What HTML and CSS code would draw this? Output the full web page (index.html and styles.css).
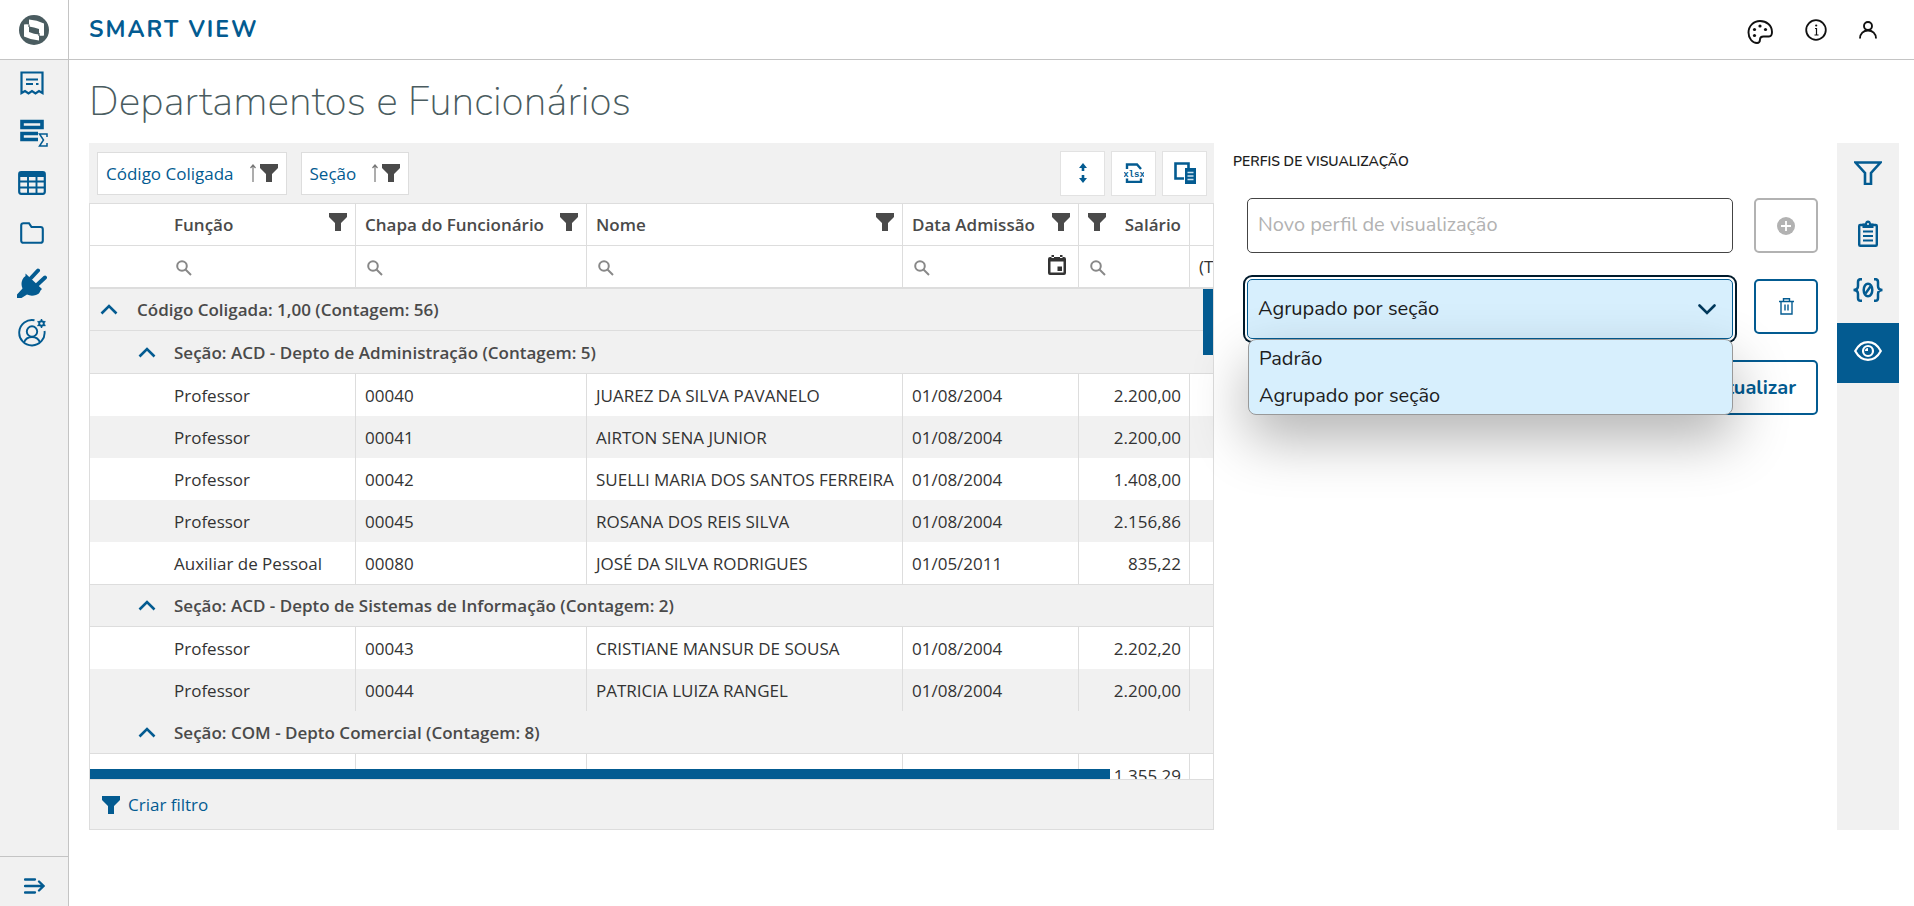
FILE: index.html
```html
<!DOCTYPE html>
<html lang="pt-BR">
<head>
  <meta charset="UTF-8">
  <title>Smart View</title>
  <link rel="stylesheet" href="styles.css">
</head>
<body>
  <svg class="sprite" aria-hidden="true">
    <symbol id="i-funnel" viewBox="0 0 18 18"><path d="M0 0h18v4l-6 6v8H6v-8L0 4z" fill="currentColor"/></symbol>
    <symbol id="i-search" viewBox="0 0 16 16"><g fill="none" stroke="currentColor" stroke-width="2"><circle cx="6" cy="6" r="4.8"/><path d="M9.5 9.5L15 15"/></g></symbol>
    <symbol id="i-up" viewBox="0 0 18 11"><path d="M1.5 9.5L9 2l7.500 7.500" fill="none" stroke="currentColor" stroke-width="2.600"/></symbol>
    <symbol id="i-sort" viewBox="0 0 6 18"><path d="M3 18V1M.5 4L3 1l2.500 3" fill="none" stroke="currentColor" stroke-width="1.200"/></symbol>
  </svg>

  <header class="header">
    <a class="logo" href="#" aria-label="Início">
      <svg width="30" height="30" viewBox="0 0 30 30"><circle cx="15" cy="15" r="15" fill="#4a5c60"/><path d="M10 4.500q8 .5 15 4V20.500q-2 .5-5 0v5q-8-.5-15-4V9.500q2-.5 5 0z" fill="#fff"/><path d="M10 11.500q5 .5 10 2.500v5.500q-5-.5-10-2.500z" fill="#4a5c60"/><path d="M10 9.500v2.500M20 18v3" stroke="#4a5c60" stroke-width="1.200"/></svg>
    </a>
    <span class="brand">SMART VIEW</span>
    <div class="header-actions">
      <button class="plain-btn palette" title="Tema">
        <svg width="26" height="26" viewBox="0 0 26 26"><path d="M13 2C6.500 2 1.500 7 1.500 13.500c0 6 4 10.500 8.500 10.500 3 0 3-2 3-3.500 0-2.500 1.500-3 3.500-3H22c2 0 3-2 3-4.500C25 6.500 19.500 2 13 2z" fill="none" stroke="#111" stroke-width="1.900"/><g fill="#111"><circle cx="7.500" cy="10.500" r="1.600"/><circle cx="13" cy="7" r="1.600"/><circle cx="18.500" cy="10.500" r="1.600"/><circle cx="7.500" cy="16.500" r="1.600"/></g></svg>
      </button>
      <button class="plain-btn" title="Sobre">
        <svg width="22" height="22" viewBox="0 0 22 22"><circle cx="11" cy="11" r="9.800" fill="none" stroke="#111" stroke-width="1.800"/><path d="M10 9.500h1.500V16M9.500 16h4" stroke="#111" stroke-width="1.200" fill="none"/><circle cx="11.200" cy="6.500" r="1.100" fill="#111"/></svg>
      </button>
      <button class="plain-btn" title="Usuário">
        <svg width="18" height="18" viewBox="0 0 18 18"><g fill="none" stroke="#111" stroke-width="1.900"><circle cx="9" cy="5" r="4"/><path d="M1 17.500C1 12.500 4.500 9.500 9 9.500s8 3 8 8"/></g></svg>
      </button>
    </div>
  </header>

  <div class="page">
    <nav class="sidebar">
      <a href="#" title="Relatórios"><svg width="24" height="24" viewBox="0 0 24 24"><path d="M1.500 22V1.500h21V22l-3.500-2-3.500 2.500L12 20l-3.500 2.500L5 20z" fill="none" stroke="currentColor" stroke-width="2.200"/><path d="M6 8.500h12M6 13h7M16 13h2.500" stroke="currentColor" stroke-width="2.200"/></svg></a>
      <a href="#" title="Visão de dados"><svg class="sigma" width="28" height="28" viewBox="0 0 28 28"><path d="M2 2.500h20v6H2zM18 14.500H2v6h16" fill="none" stroke="currentColor" stroke-width="3.600"/><path d="M27 18v-3h-7.500l4 6-4 6H27v-3" fill="none" stroke="currentColor" stroke-width="1.500"/></svg></a>
      <a href="#" title="Tabelas"><svg width="28" height="24" viewBox="0 0 28 24"><rect x="1.200" y="1.200" width="25.600" height="21.600" rx="2" fill="none" stroke="currentColor" stroke-width="2.200"/><path d="M1 1h26v5H1z" fill="currentColor"/><path d="M1 10.500h26M1 16.500h26M10 4v19M18.500 4v19" stroke="currentColor" stroke-width="1.900"/></svg></a>
      <a href="#" title="Pastas"><svg width="24" height="22" viewBox="0 0 24 22"><path d="M1.200 3.500q0-2.300 2.300-2.300h5.500L11.500 5h9q2.300 0 2.300 2.300v11.200q0 2.300-2.300 2.300h-17q-2.300 0-2.300-2.300z" fill="none" stroke="currentColor" stroke-width="2.100"/></svg></a>
      <a href="#" title="Conectores"><svg width="30" height="30" viewBox="0 0 30 30"><path d="M8.500 5.500l16.500 15.500-1.500 1.500q-1 3.500-4.500 4.500-5 1.500-9-.5L4.500 30H0v-3.500l5.500-6q-2-4.500 0-9 1-2.500 3-3.500z" fill="currentColor"/><path d="M14 10l7-7.500M20.500 16.500l7.500-7" stroke="currentColor" stroke-width="4" stroke-linecap="round"/></svg></a>
      <a href="#" title="Administração"><svg width="28" height="28" viewBox="0 0 28 28"><g fill="none" stroke="currentColor" stroke-width="1.900"><path d="M16.500 1.300A12.700 12.700 0 1 0 26.500 12"/><circle cx="14" cy="12.500" r="5.200"/><path d="M6 23.500q2-5.500 8-5.500t8 5.500"/><circle cx="23.500" cy="4.500" r="2.300"/><path d="M23.500 0v9M19.500 2.300l8 4.500M19.500 6.800l8-4.500" stroke-width="1.500" stroke-dasharray="2.300 4.500"/></g></svg></a>
      <button class="plain-btn expand" title="Expandir menu"><svg width="21" height="16" viewBox="0 0 21 16"><path d="M1 1.500h10M1 8h18M1 14.500h10M15 3.500L19.500 8 15 12.500" fill="none" stroke="currentColor" stroke-width="2.300" stroke-linecap="round"/></svg></button>
    </nav>

    <main class="main">
      <h1>Departamentos e Funcionários</h1>

      <div class="workspace">
        <section class="grid">
          <div class="toolbar">
            <button class="chip">Código Coligada <svg class="sort"><use href="#i-sort"/></svg><svg class="funnel"><use href="#i-funnel"/></svg></button>
            <button class="chip">Seção <svg class="sort"><use href="#i-sort"/></svg><svg class="funnel"><use href="#i-funnel"/></svg></button>
            <div class="tools">
              <button class="tool" title="Expandir"><svg width="8" height="20" viewBox="0 0 8 20"><path d="M4 0l4 5H5.300v3H2.700V5H0zM4 20l4-5H5.300v-3H2.700v3H0z" fill="currentColor"/></svg></button>
              <button class="tool" title="Exportar para Excel"><svg width="20" height="20" viewBox="0 0 20 20"><path d="M3 6V1.500h10L17 6M3 15.500V19h14v-3.500" fill="none" stroke="currentColor" stroke-width="2.400"/><text class="xlsx" x="10" y="14" text-anchor="middle">xlsx</text></svg></button>
              <button class="tool" title="Colunas"><svg width="22" height="22" viewBox="0 0 22 22"><path d="M10 16.500H1.500v-15h13V6" fill="none" stroke="currentColor" stroke-width="2.600"/><path d="M11 6h11v16H11z" fill="currentColor"/><path d="M13.500 10.500h6M13.500 14h6M13.500 17.500h6" stroke="#cfe3f0" stroke-width="1.400"/></svg></button>
            </div>
          </div>

          <div class="table-view">
            <table>
              <colgroup>
                <col class="c-exp1"><col class="c-exp2"><col class="c-func"><col class="c-chapa"><col class="c-nome"><col class="c-data"><col class="c-sal"><col>
              </colgroup>
              <thead>
                <tr>
                  <th class="nb"></th><th class="nb"></th>
                  <th>Função <svg class="funnel"><use href="#i-funnel"/></svg></th>
                  <th>Chapa do Funcionário <svg class="funnel"><use href="#i-funnel"/></svg></th>
                  <th>Nome <svg class="funnel"><use href="#i-funnel"/></svg></th>
                  <th>Data Admissão <svg class="funnel"><use href="#i-funnel"/></svg></th>
                  <th class="num">Salário <svg class="funnel left"><use href="#i-funnel"/></svg></th>
                  <th></th>
                </tr>
                <tr class="filters">
                  <td class="nb"></td><td class="nb"></td>
                  <td><svg class="search"><use href="#i-search"/></svg></td>
                  <td><svg class="search"><use href="#i-search"/></svg></td>
                  <td><svg class="search"><use href="#i-search"/></svg></td>
                  <td><svg class="search"><use href="#i-search"/></svg><svg class="calendar" viewBox="0 0 18 20"><path d="M2 2h14q2 0 2 2v14q0 2-2 2H2q-2 0-2-2V4q0-2 2-2zM2.500 6.500v11h13v-11zM3.500 0H6v3H3.500zM12 0h2.500v3H12zM9.500 11.500H14V16H9.500z" fill="#333" fill-rule="evenodd"/></svg></td>
                  <td><svg class="search"><use href="#i-search"/></svg></td>
                  <td>(Todos)</td>
                </tr>
              </thead>
              <tbody>
                <tr class="group top"><td class="nb"><svg class="chev"><use href="#i-up"/></svg></td><td colspan="7">Código Coligada: 1,00 (Contagem: 56)</td></tr>
                <tr class="group"><td class="nb"></td><td class="nb"><svg class="chev"><use href="#i-up"/></svg></td><td colspan="6">Seção: ACD - Depto de Administração (Contagem: 5)</td></tr>
                <tr><td class="nb"></td><td class="nb"></td><td>Professor</td><td>00040</td><td>JUAREZ DA SILVA PAVANELO</td><td>01/08/2004</td><td class="num">2.200,00</td><td></td></tr>
                <tr class="alt"><td class="nb"></td><td class="nb"></td><td>Professor</td><td>00041</td><td>AIRTON SENA JUNIOR</td><td>01/08/2004</td><td class="num">2.200,00</td><td></td></tr>
                <tr><td class="nb"></td><td class="nb"></td><td>Professor</td><td>00042</td><td>SUELLI MARIA DOS SANTOS FERREIRA</td><td>01/08/2004</td><td class="num">1.408,00</td><td></td></tr>
                <tr class="alt"><td class="nb"></td><td class="nb"></td><td>Professor</td><td>00045</td><td>ROSANA DOS REIS SILVA</td><td>01/08/2004</td><td class="num">2.156,86</td><td></td></tr>
                <tr><td class="nb"></td><td class="nb"></td><td>Auxiliar de Pessoal</td><td>00080</td><td>JOSÉ DA SILVA RODRIGUES</td><td>01/05/2011</td><td class="num">835,22</td><td></td></tr>
                <tr class="group line"><td class="nb"></td><td class="nb"><svg class="chev"><use href="#i-up"/></svg></td><td colspan="6">Seção: ACD - Depto de Sistemas de Informação (Contagem: 2)</td></tr>
                <tr><td class="nb"></td><td class="nb"></td><td>Professor</td><td>00043</td><td>CRISTIANE MANSUR DE SOUSA</td><td>01/08/2004</td><td class="num">2.202,20</td><td></td></tr>
                <tr class="alt"><td class="nb"></td><td class="nb"></td><td>Professor</td><td>00044</td><td>PATRICIA LUIZA RANGEL</td><td>01/08/2004</td><td class="num">2.200,00</td><td></td></tr>
                <tr class="group"><td class="nb"></td><td class="nb"><svg class="chev"><use href="#i-up"/></svg></td><td colspan="6">Seção: COM - Depto Comercial (Contagem: 8)</td></tr>
                <tr><td class="nb"></td><td class="nb"></td><td>Vendedor</td><td>00083</td><td>JOAO DA SILVA ARDEMA</td><td>03/01/1994</td><td class="num">1.355,29</td><td></td></tr>
              </tbody>
            </table>
            <div class="vbar"></div>
            <div class="hbar"></div>
          </div>

          <div class="grid-footer">
            <button class="plain-btn create-filter"><svg class="funnel"><use href="#i-funnel"/></svg>Criar filtro</button>
          </div>
        </section>

        <section class="profiles">
          <h2>PERFIS DE VISUALIZAÇÃO</h2>
          <div class="field-row">
            <input class="field" type="text" placeholder="Novo perfil de visualização" aria-label="Novo perfil de visualização">
            <button class="btn" disabled title="Adicionar"><svg width="18" height="18" viewBox="0 0 18 18"><circle cx="9" cy="9" r="9" fill="currentColor"/><path d="M9 4v10M4 9h10" stroke="#fff" stroke-width="1.800"/></svg></button>
          </div>
          <div class="field-row second">
            <div class="select-wrap">
              <select class="field select" aria-label="Perfil de visualização">
                <option>Padrão</option>
                <option selected>Agrupado por seção</option>
              </select>
              <svg class="caret" viewBox="0 0 18 11"><path d="M1.500 1.500L9 9l7.500-7.500" fill="none" stroke="#00395c" stroke-width="2.600" stroke-linecap="round"/></svg>
              <ul class="menu">
                <li>Padrão</li>
                <li>Agrupado por seção</li>
              </ul>
            </div>
            <button class="btn" title="Excluir"><svg width="15" height="17" viewBox="0 0 15 17"><path d="M0 3.500h15M2 3.500v12.500h11V3.500M4.500 3V.8h6V3M6 6.500v6M9 6.500v6" fill="none" stroke="currentColor" stroke-width="1.400"/></svg></button>
          </div>
          <div class="actions">
            <button class="btn">Salvar</button>
            <button class="btn">Atualizar</button>
          </div>
        </section>

        <nav class="side-tools">
          <button title="Filtros"><svg width="28" height="24" viewBox="0 0 28 24"><path d="M1.500 1.500h25L17 12v11h-6V12z" fill="none" stroke="currentColor" stroke-width="2.600"/></svg></button>
          <button title="Parâmetros"><svg width="20" height="27" viewBox="0 0 20 27"><rect x="1.200" y="5" width="17.600" height="20.800" rx="1" fill="none" stroke="currentColor" stroke-width="2.400"/><path d="M4.500 3.500H7q.5-3 3-3t3 3h2.500V8h-11z" fill="currentColor"/><circle cx="10" cy="4" r="1" fill="#f1f1f1"/><path d="M5 11.500h10M5 16h10M5 20.500h10" stroke="currentColor" stroke-width="1.900"/></svg></button>
          <button title="Variáveis"><svg width="30" height="30" viewBox="0 0 30 30"><g fill="none" stroke="currentColor" stroke-width="2.500"><path d="M9 1.200H7.500Q5 1.200 5 4v4q0 4-4.500 4Q5 12 5 16v4q0 2.800 2.500 2.800H9M21 1.200h1.500Q25 1.200 25 4v4q0 4 4.500 4-4.500 0-4.500 4v4q0 2.800-2.500 2.800H21"/><ellipse cx="15" cy="12" rx="4.300" ry="6.300"/><path d="M12.500 15.500l5-7"/></g></svg></button>
          <button class="active" title="Visualização"><svg width="28" height="24" viewBox="0 0 28 24"><g fill="none" stroke="currentColor" stroke-width="2.200"><path d="M1.200 10Q6 1.200 14 1.200T26.800 10Q22 18.800 14 18.800T1.200 10z"/><circle cx="14" cy="10" r="5"/></g><path d="M11 10a3 3 0 0 1 3-3v3z" fill="currentColor"/></svg></button>
        </nav>
      </div>
    </main>
  </div>
</body>
</html>
```
FILE: styles.css
```css
* {
  box-sizing: border-box;
}

body {
  margin: 0;
  height: 100vh;
  display: flex;
  flex-direction: column;
  overflow: hidden;
  font-family: 'Nunito', 'Lato', sans-serif;
  color: #1d1d1d;
  background: #fff;
}

button {
  font-family: inherit;
  cursor: pointer;
}

svg {
  display: block;
}

.sprite {
  display: none;
}

.plain-btn {
  background: none;
  border: none;
  padding: 0;
  color: inherit;
}

/* header */
.header {
  display: flex;
  align-items: center;
  height: 60px;
  flex: none;
  border-bottom: 1px solid #c4c4c4;
}

.logo {
  width: 69px;
  height: 100%;
  display: flex;
  align-items: center;
  justify-content: center;
  border-right: 1px solid #c4c4c4;
}

.brand {
  margin-left: 20px;
  font-size: 23px;
  font-weight: 700;
  letter-spacing: 2px;
  color: #035b91;
}

.header-actions {
  margin-left: auto;
  margin-right: 37px;
  display: flex;
  align-items: center;
  gap: 32px;
}

.palette {
  padding-top: 5px;
}

/* left menu */
.page {
  flex: 1;
  min-height: 0;
  display: flex;
}

.sidebar {
  width: 69px;
  flex: none;
  display: flex;
  flex-direction: column;
  background: #f1f1f1;
  border-right: 1px solid #c4c4c4;
  color: #035b91;
}

.sidebar a {
  height: 50px;
  display: flex;
  align-items: center;
  justify-content: center;
  padding: 0 4px 4px 0;
  color: inherit;
}

.sidebar .sigma {
  margin-left: 4px;
}

.expand {
  margin-top: auto;
  height: 50px;
  display: flex;
  align-items: center;
  justify-content: center;
  padding-top: 8px;
  border-top: 1px solid #c4c4c4;
}

/* content */
.main {
  flex: 1;
  min-width: 0;
  display: flex;
  flex-direction: column;
  padding: 16px 15px 76px 20px;
}

h1 {
  margin: 0;
  height: 67px;
  font-size: 41px;
  line-height: 52px;
  font-weight: 200;
  color: #4a5c60;
}

.workspace {
  flex: 1;
  min-height: 0;
  display: grid;
  grid-template-columns: minmax(0, 1125fr) minmax(0, 623fr) 62px;
}

/* data grid */
.grid {
  min-height: 0;
  display: flex;
  flex-direction: column;
  font-family: 'Segoe UI', 'Open Sans', sans-serif;
  font-size: 17px;
  color: #333;
}

.toolbar {
  flex: none;
  height: 60px;
  display: flex;
  align-items: center;
  gap: 14px;
  padding: 0 7px 0 8px;
  background: #f1f1f1;
}

.chip {
  height: 43px;
  display: flex;
  align-items: center;
  gap: 4px;
  padding: 0 8px;
  border: 1px solid #ddd;
  background: #fff;
  font-size: 17px;
  color: #035b91;
}

.sort {
  width: 6px;
  height: 18px;
  margin-left: 12px;
  color: #777;
}

.funnel {
  width: 18px;
  height: 18px;
  color: #4a4a4a;
}

.tools {
  display: flex;
  gap: 6px;
  margin-left: auto;
}

.tool {
  width: 45px;
  height: 45px;
  display: flex;
  align-items: center;
  justify-content: center;
  padding: 0;
  border: 1px solid #e2e2e2;
  background: #fff;
  color: #035b91;
}

.xlsx {
  font: 700 9px 'Liberation Mono', monospace;
  fill: currentColor;
}

.table-view {
  flex: 1;
  min-height: 0;
  position: relative;
  overflow: hidden;
  border: 1px solid #ddd;
}

table {
  width: 1250px;
  table-layout: fixed;
  border-collapse: separate;
  border-spacing: 0;
}

.c-exp1 { width: 38px; }
.c-exp2 { width: 37px; }
.c-func { width: 191px; }
.c-chapa { width: 231px; }
.c-nome { width: 316px; }
.c-data { width: 176px; }
.c-sal { width: 111px; }

th,
td {
  height: 42px;
  padding: 0 8px 0 9px;
  text-align: left;
  white-space: nowrap;
  border-right: 1px solid #ddd;
}

th {
  font-weight: 600;
  color: #4a4a4a;
  border-bottom: 1px solid #ddd;
}

th .funnel {
  float: right;
}

th .funnel.left {
  float: left;
}

.filters td {
  height: 43px;
  border-bottom: 2px solid #ddd;
}

.nb {
  border-right: none;
  padding: 0 8px 0 10px;
}

.num {
  text-align: right;
}

.search {
  width: 16px;
  height: 16px;
  margin-left: 2px;
  color: #888;
}

.filters .search {
  display: inline-block;
  vertical-align: middle;
}

.calendar {
  float: right;
  width: 18px;
  height: 20px;
  margin-right: 4px;
}

.group td {
  height: 43px;
  font-weight: 600;
  color: #4a4a4a;
  background: #f1f1f1;
  border-bottom: 1px solid #ddd;
}

.group.top td {
  height: 42px;
}

.group.line td {
  border-top: 1px solid #ddd;
}

.alt td {
  background: #f1f1f1;
}

.chev {
  width: 18px;
  height: 11px;
  color: #035b91;
}

/* scrollbars */
.vbar {
  position: absolute;
  top: 85px;
  right: 0;
  width: 10px;
  height: 66px;
  background: #035b91;
}

.hbar {
  position: absolute;
  left: 0;
  bottom: 0;
  width: 1020px;
  height: 10px;
  background: #035b91;
}

.grid-footer {
  flex: none;
  height: 50px;
  display: flex;
  align-items: center;
  padding: 0 12px;
  background: #f1f1f1;
  border: 1px solid #ddd;
  border-top: none;
}

.create-filter {
  display: flex;
  align-items: center;
  gap: 8px;
  font-size: 17px;
  color: #035b91;
}

.create-filter .funnel {
  color: #035b91;
}

/* profiles panel */
.profiles {
  padding: 9px 19px 0;
}

h2 {
  margin: 0 0 26px;
  font-size: 14px;
  line-height: 20px;
  font-weight: 600;
}

.field-row {
  display: flex;
  gap: 21px;
  padding-left: 14px;
}

.second {
  margin-top: 26px;
}

.field {
  flex: 1;
  min-width: 0;
  height: 55px;
  padding: 0 10px 2px;
  border: 1px solid #444;
  border-radius: 5px;
  font-family: inherit;
  font-size: 20px;
  color: #1d1d1d;
  background: #fff;
}

.field::placeholder {
  color: #b2b2b2;
}

.btn {
  min-width: 64px;
  height: 55px;
  display: flex;
  align-items: center;
  justify-content: center;
  padding: 0 20px;
  border: 2px solid #035b91;
  border-radius: 5px;
  background: #fff;
  font-size: 20px;
  font-weight: 700;
  color: #035b91;
}

.btn:disabled {
  border-color: #b2b2b2;
  color: #b2b2b2;
}

.select-wrap {
  flex: 1;
  position: relative;
  display: flex;
}

.select {
  height: 60px;
  appearance: none;
  background: #d7effd;
  border-color: #035b91;
  box-shadow: 0 0 0 2px #fff, 0 0 0 4px #001a2b;
}

.caret {
  position: absolute;
  right: 17px;
  top: 25px;
  width: 18px;
  height: 11px;
}

.menu {
  position: absolute;
  top: 60px;
  left: 1px;
  right: 0;
  margin: 0;
  padding: 0;
  list-style: none;
  background: #d7effd;
  border: 1px solid #999;
  border-radius: 8px;
  box-shadow: 0 24px 56px rgba(0, 0, 0, 0.3);
  font-size: 20px;
  line-height: 37px;
}

.menu li {
  padding: 0 10px;
}

.actions {
  display: flex;
  justify-content: flex-end;
  gap: 12px;
  margin-top: 21px;
}

/* right tools */
.side-tools {
  background: #f1f1f1;
}

.side-tools button {
  width: 100%;
  height: 60px;
  display: flex;
  align-items: center;
  justify-content: center;
  padding: 0;
  border: none;
  background: none;
  color: #035b91;
}

.side-tools .active {
  background: #035b91;
  color: #fff;
}
```
